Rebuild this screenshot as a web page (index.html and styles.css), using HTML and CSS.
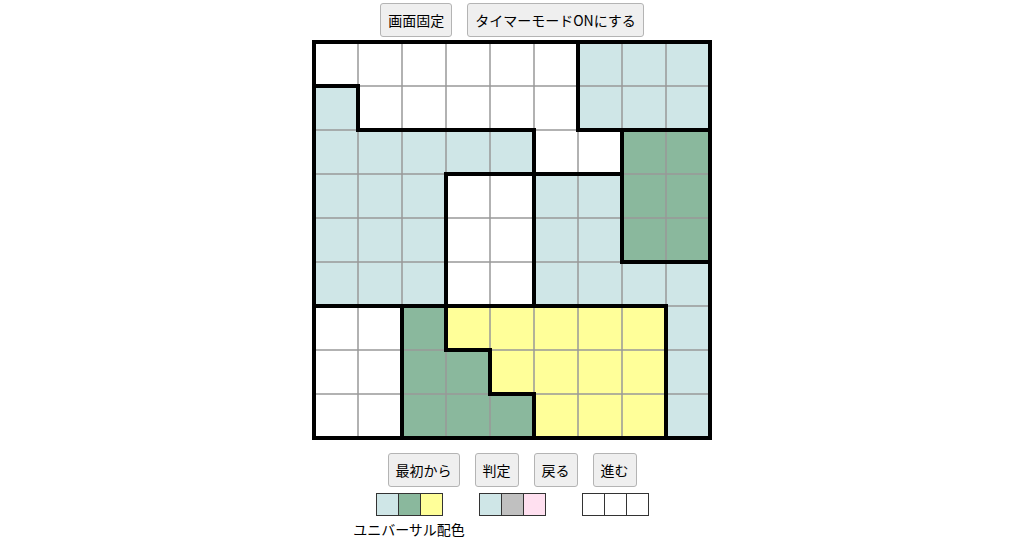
FILE: index.html
```html
<!DOCTYPE html>
<html lang="ja">
<head>
<meta charset="utf-8">
<title>パズル</title>
<link rel="stylesheet" href="styles.css">
</head>
<body>
<div class="page">
  <div class="btn-row top-row">
    <button class="btn">画面固定</button>
    <button class="btn">タイマーモードONにする</button>
  </div>
  <div class="board">
    <svg width="400" height="400" viewBox="0 0 400 400" xmlns="http://www.w3.org/2000/svg">
      <g id="cells"></g>
      <g id="thin" stroke="#999" stroke-width="1.5"></g>
      <g id="thick" stroke="#000" stroke-width="4" stroke-linecap="square" fill="none"></g>
      <rect x="2" y="2" width="396" height="396" fill="none" stroke="#000" stroke-width="4"/>
    </svg>
  </div>
  <div class="btn-row bottom-row">
    <button class="btn">最初から</button>
    <button class="btn">判定</button>
    <button class="btn">戻る</button>
    <button class="btn">進む</button>
  </div>
  <div class="palettes">
    <div class="palette-group">
      <div class="swatches">
        <span class="sw c-blue"></span><span class="sw c-green"></span><span class="sw c-yellow"></span>
      </div>
      <div class="label">ユニバーサル配色</div>
    </div>
    <div class="palette-group">
      <div class="swatches">
        <span class="sw c-blue"></span><span class="sw c-gray"></span><span class="sw c-pink"></span>
      </div>
    </div>
    <div class="palette-group">
      <div class="swatches">
        <span class="sw c-white"></span><span class="sw c-white"></span><span class="sw c-white"></span>
      </div>
    </div>
  </div>
</div>
<script src="app.js"></script>
</body>
</html>
```
FILE: styles.css
```css
html, body {
  margin: 0;
  padding: 0;
  background: #fff;
}
body {
  font-family: "Noto Sans CJK JP", "Noto Sans", sans-serif;
  font-size: 14px;
  color: #000;
}
.page {
  width: 1024px;
  display: flex;
  flex-direction: column;
  align-items: center;
}
.btn-row {
  display: flex;
  gap: 15px;
  justify-content: center;
}
.top-row {
  margin-top: 3px;
}
.bottom-row {
  margin-top: 13px;
}
.btn {
  height: 34px;
  padding: 0 7px;
  border: 1px solid #b4b4b4;
  border-radius: 3px;
  background: #efefef;
  font-family: "Noto Sans CJK JP", "Noto Sans", sans-serif;
  font-size: 14px;
  line-height: 20px;
  color: #000;
}
.board {
  margin-top: 3px;
  width: 400px;
  height: 400px;
}
.board svg {
  display: block;
}
.palettes {
  margin-top: 6px;
  display: flex;
  gap: 36px;
  justify-content: center;
  align-items: flex-start;
}
.palette-group {
  width: 67px;
  display: flex;
  flex-direction: column;
  align-items: center;
}
.swatches {
  display: flex;
}
.sw {
  width: 21px;
  height: 21px;
  border: 1px solid #333;
  display: block;
}
.sw + .sw {
  margin-left: -1px;
}
.c-blue { background: #cfe6e7; }
.c-green { background: #8ab89d; }
.c-yellow { background: #ffff99; }
.c-gray { background: #c0c0c0; }
.c-pink { background: #ffe0f0; }
.c-white { background: #fff; }
.label {
  margin-top: 3px;
  white-space: nowrap;
  font-size: 14px;
  line-height: 20px;
}
```
FILE: app.js
```js
(function () {
  var NS = "http://www.w3.org/2000/svg";
  var S = 44, O = 2;
  var grid = [
    "WWWWWWLLL",
    "LWWWWWLLL",
    "LLLLLWWGG",
    "LLLWWLLGG",
    "LLLWWLLGG",
    "LLLWWLLLL",
    "WWGYYYYYL",
    "WWGGYYYYL",
    "WWGGGYYYL"
  ];
  var colors = { W: "#ffffff", L: "#cfe6e7", G: "#8ab89d", Y: "#ffff99" };
  var cells = document.getElementById("cells");
  var thin = document.getElementById("thin");
  var thick = document.getElementById("thick");
  for (var r = 0; r < 9; r++) {
    for (var c = 0; c < 9; c++) {
      var rect = document.createElementNS(NS, "rect");
      rect.setAttribute("x", O + c * S);
      rect.setAttribute("y", O + r * S);
      rect.setAttribute("width", S);
      rect.setAttribute("height", S);
      rect.setAttribute("fill", colors[grid[r][c]]);
      cells.appendChild(rect);
    }
  }
  function line(g, x1, y1, x2, y2) {
    var l = document.createElementNS(NS, "line");
    l.setAttribute("x1", O + x1 * S);
    l.setAttribute("y1", O + y1 * S);
    l.setAttribute("x2", O + x2 * S);
    l.setAttribute("y2", O + y2 * S);
    g.appendChild(l);
  }
  for (var i = 1; i < 9; i++) {
    line(thin, i, 0, i, 9);
    line(thin, 0, i, 9, i);
  }
  var h = [[1, 0, 1], [2, 1, 5], [2, 6, 9], [3, 3, 7], [5, 7, 9], [6, 0, 8], [7, 3, 4], [8, 4, 5]];
  var v = [[1, 1, 2], [2, 6, 9], [3, 3, 7], [4, 7, 8], [5, 2, 6], [5, 8, 9], [6, 0, 2], [7, 2, 5], [8, 6, 9]];
  h.forEach(function (s) { line(thick, s[1], s[0], s[2], s[0]); });
  v.forEach(function (s) { line(thick, s[0], s[1], s[0], s[2]); });
})();
```
